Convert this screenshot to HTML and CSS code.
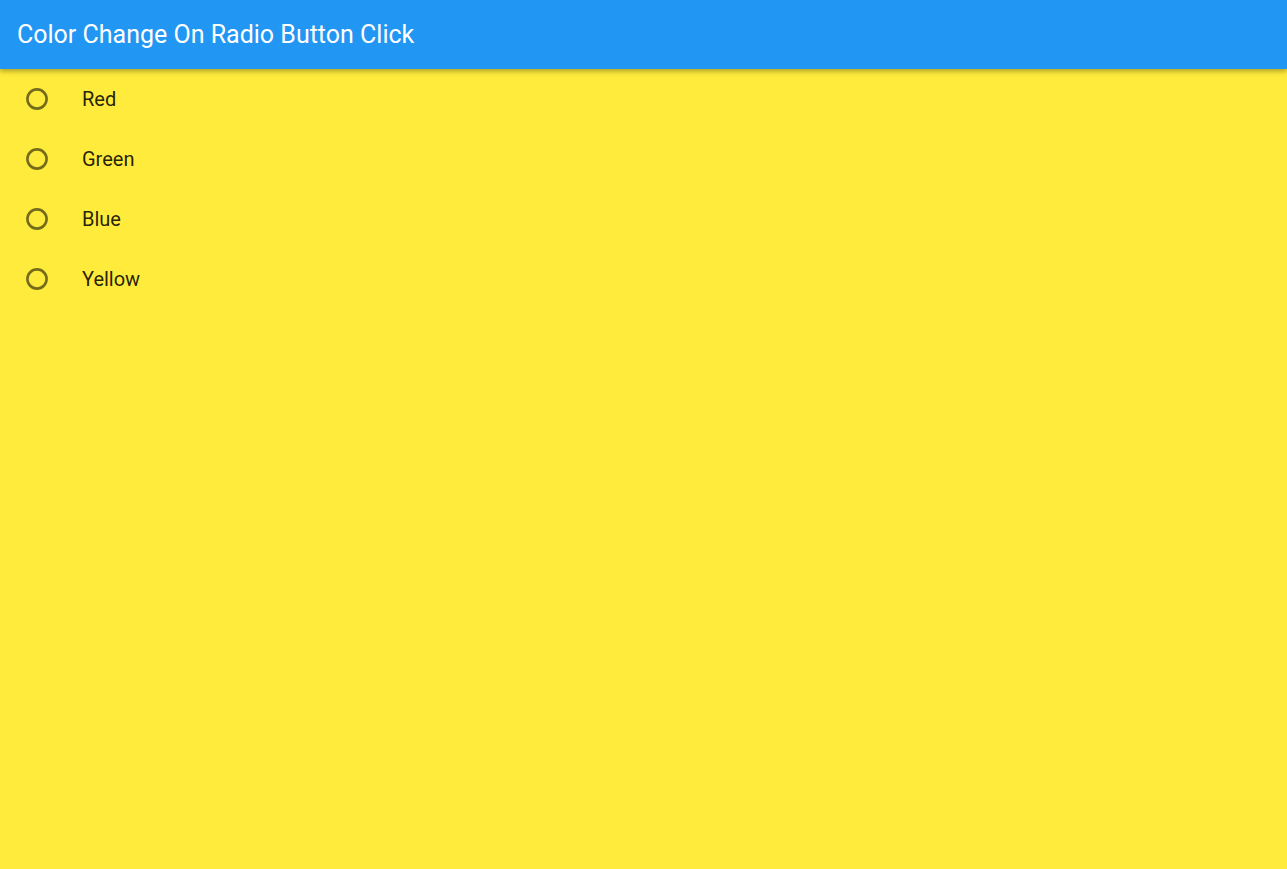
FILE: index.html
```html
<!DOCTYPE html>
<html>
<head>
<meta charset="utf-8">
<link rel="stylesheet" href="styles.css">
</head>
<body>
<header class="appbar">
  <h1 class="title">Color Change On Radio Button Click</h1>
</header>
<main class="list">
  <label class="row"><svg class="radio" viewBox="0 0 22 22"><circle cx="11" cy="11" r="9.6" /></svg><span class="label">Red</span></label>
  <label class="row"><svg class="radio" viewBox="0 0 22 22"><circle cx="11" cy="11" r="9.6" /></svg><span class="label">Green</span></label>
  <label class="row"><svg class="radio" viewBox="0 0 22 22"><circle cx="11" cy="11" r="9.6" /></svg><span class="label">Blue</span></label>
  <label class="row"><svg class="radio" viewBox="0 0 22 22"><circle cx="11" cy="11" r="9.6" /></svg><span class="label">Yellow</span></label>
</main>
</body>
</html>
```
FILE: styles.css
```css
html, body {
  margin: 0;
  padding: 0;
  height: 100%;
}
body {
  background: #ffeb3b;
  font-family: Roboto, "Liberation Sans", sans-serif;
  display: flex;
  flex-direction: column;
}
.appbar {
  height: 69px;
  background: #2196f3;
  display: flex;
  align-items: center;
  padding-left: 17px;
  box-shadow: 0 2px 4px rgba(0,0,0,0.2), 0 4px 5px rgba(0,0,0,0.1);
  position: relative;
  z-index: 1;
}
.title {
  margin: 0;
  color: #fff;
  font-size: 25px;
  font-weight: 400;
}
.list {
  display: flex;
  flex-direction: column;
}
.row {
  height: 60px;
  display: flex;
  align-items: center;
  padding-left: 26px;
}
.radio {
  width: 22px;
  height: 22px;
  flex: none;
}
.radio circle {
  fill: none;
  stroke: rgba(0,0,0,0.54);
  stroke-width: 2.6;
}
.label {
  margin-left: 34px;
  font-size: 20px;
  color: rgba(0,0,0,0.87);
}
```
